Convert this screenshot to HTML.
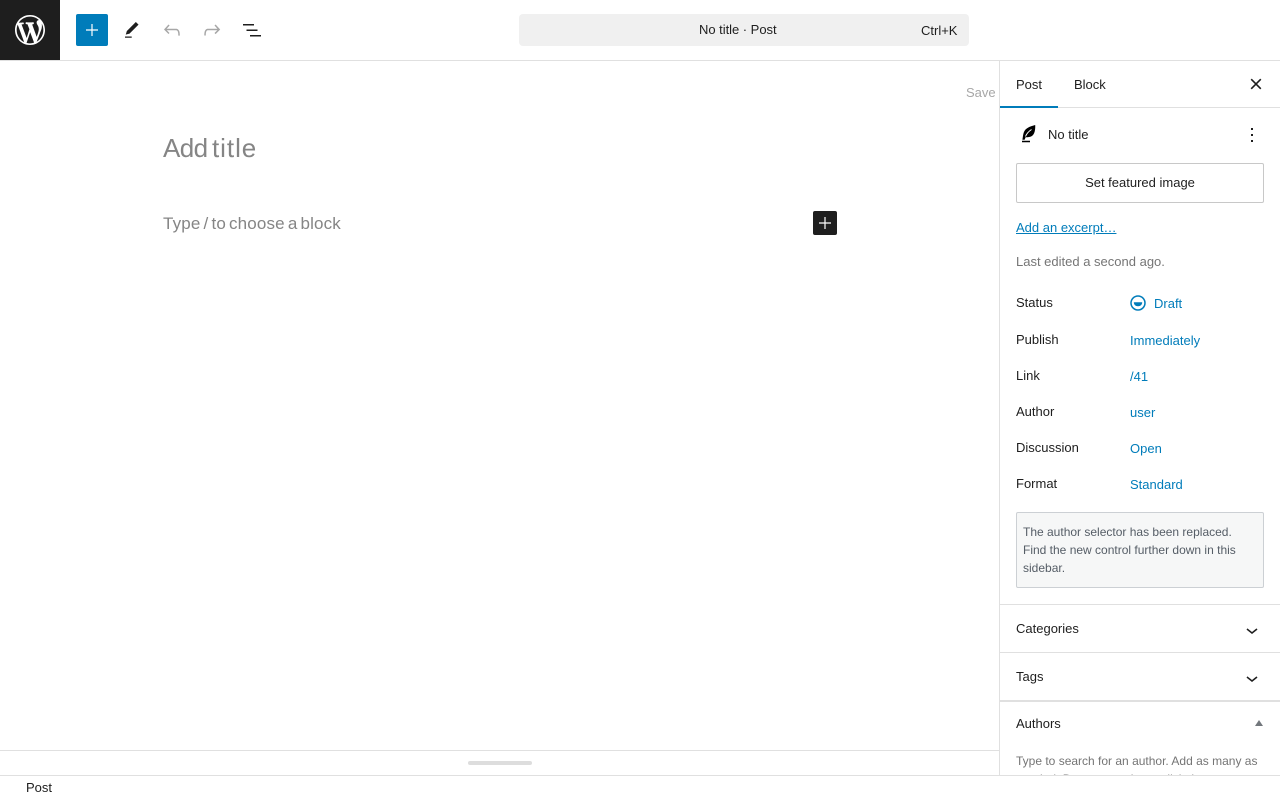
<!DOCTYPE html>
<html lang="en"><head><meta charset="utf-8"><title>Post</title>
<style>
html,body{margin:0;padding:0;width:1280px;height:800px;overflow:hidden;background:#fff;font-family:"Liberation Sans",sans-serif;font-size:13px;color:#1e1e1e}
.a{position:absolute;white-space:nowrap;line-height:16px}
svg{position:absolute;display:block}
.l{left:1016px}
.v{left:1130px;color:#007cba}
.line{position:absolute;background:#e0e0e0}
</style></head><body>
<div class="a" style="left:0;top:0;width:60px;height:60px;background:#1e1e1e"></div>
<svg style="left:12px;top:12px" width="36" height="36" viewBox="-2 -2 24 24" fill="#fff"><path d="M20 10c0-5.51-4.49-10-10-10C4.48 0 0 4.49 0 10c0 5.52 4.48 10 10 10 5.51 0 10-4.48 10-10zM7.78 15.37L4.37 6.22c.55-.02 1.17-.08 1.17-.08.5-.06.44-1.13-.06-1.11 0 0-1.45.11-2.37.11-.18 0-.37 0-.58-.01C4.12 2.69 6.87 1.11 10 1.11c2.33 0 4.45.87 6.05 2.34-.68-.11-1.65.39-1.65 1.58 0 .74.45 1.36.9 2.1.35.61.55 1.36.55 2.46 0 1.49-1.4 5-1.4 5l-3.03-8.37c.54-.02.82-.17.82-.17.5-.05.44-1.25-.06-1.22 0 0-1.44.12-2.38.12-.87 0-2.33-.12-2.33-.12-.5-.03-.56 1.2-.06 1.22l.92.08 1.26 3.41zM17.41 10c.24-.64.74-1.87.43-4.25.7 1.29 1.05 2.71 1.05 4.25 0 3.29-1.73 6.24-4.4 7.78.97-2.59 1.94-5.2 2.92-7.78zM6.1 18.09C3.12 16.65 1.11 13.53 1.11 10c0-1.3.23-2.48.72-3.59C3.25 10.3 4.67 14.2 6.1 18.09zm4.03-6.63l2.58 6.98c-.86.29-1.76.45-2.71.45-.79 0-1.57-.11-2.29-.33.81-2.38 1.62-4.74 2.42-7.1z"/></svg>
<div class="line" style="left:0;top:60px;width:1280px;height:1px"></div>

<div class="a" style="left:76px;top:14px;width:32px;height:32px;background:#007cba;border-radius:2px"></div>
<svg style="left:80px;top:18px" width="24" height="24" viewBox="0 0 24 24" fill="#fff"><path d="M18 11.4h-5.4V6h-1.2v5.4H6v1.2h5.4V18h1.2v-5.4H18z"/></svg>
<svg style="left:120px;top:18px" width="24" height="24" viewBox="0 0 24 24" fill="#1e1e1e"><path transform="translate(1.64 2.3) scale(.84)" d="M20.1 5.1L16.9 2 6.2 12.7l-1.3 4.4 4.5-1.3L20.1 5.1zM4 20.8h8v-1.5H4v1.5z"/></svg>
<svg style="left:160px;top:18px" width="24" height="24" viewBox="0 0 24 24" fill="#a7a7a7"><path d="M18.3 11.7c-.6-.6-1.4-.9-2.3-.9H6.7l2.9-3.3-1.1-1-4.5 5L8.5 16l1-1-2.7-2.7H16c.5 0 .9.2 1.3.5 1 1 1 3.4 1 4.5v.3h1.5v-.2c0-1.5 0-4.3-1.5-5.7z"/></svg>
<svg style="left:200px;top:18px" width="24" height="24" viewBox="0 0 24 24" fill="#a7a7a7"><path d="M15.6 6.5l-1.1 1 2.9 3.3H8c-.9 0-1.7.3-2.3.9-1.4 1.5-1.4 4.2-1.4 5.6v.2h1.5v-.3c0-1.1 0-3.5 1-4.5.3-.3.7-.5 1.3-.5h9.2L14.5 15l1.1 1.1 4.6-4.6-4.6-5z"/></svg>
<svg style="left:240px;top:18px" width="24" height="24" viewBox="0 0 24 24" fill="#1e1e1e"><path d="M3 6h11v1.5H3V6zm3.5 5.5h11V13h-11v-1.5zM21 17H10v1.5h11V17z"/></svg>

<div class="a" style="left:519px;top:14px;width:450px;height:32px;background:#f0f0f0;border-radius:4px"></div>
<div class="a" style="left:699px;top:22px;letter-spacing:-.03px">No title · Post</div>
<div class="a" style="left:921px;top:23px">Ctrl+K</div>

<div class="a" style="left:966px;top:85px;color:#a7a7a7">Save</div>
<div class="a" style="left:163px;top:130px;font-size:26px;line-height:36px;color:#858585;letter-spacing:-.6px">Add</div>
<div class="a" style="left:212px;top:130px;font-size:26px;line-height:36px;color:#858585;letter-spacing:.95px">title</div>
<div class="a" style="left:163px;top:212px;font-size:17px;line-height:24px;color:#858585;letter-spacing:.15px;word-spacing:-1.8px">Type / to choose a block</div>
<div class="a" style="left:813px;top:211px;width:24px;height:24px;background:#1e1e1e;border-radius:2px"></div>
<svg style="left:813px;top:211px" width="24" height="24" viewBox="0 0 24 24" fill="#fff"><path d="M18 11.4h-5.4V6h-1.2v5.4H6v1.2h5.4V18h1.2v-5.4H18z"/></svg>

<div class="line" style="left:0;top:750px;width:999px;height:1px"></div>
<div class="a" style="left:468px;top:761px;width:64px;height:4px;background:#ddd;border-radius:2px"></div>

<div class="line" style="left:999px;top:61px;width:1px;height:714px"></div>
<div class="a l" style="top:77px">Post</div>
<div class="a" style="left:1074px;top:77px">Block</div>
<svg style="left:1244px;top:72px" width="24" height="24" viewBox="0 0 24 24" fill="none" stroke="#1e1e1e" stroke-width="1.6"><path d="M7.200 7.200L16.800 16.800M16.800 7.200L7.200 16.800"/></svg>
<div class="line" style="left:1000px;top:107px;width:280px;height:1px"></div>
<div class="a" style="left:1000px;top:106px;width:58px;height:2px;background:#007cba"></div>

<svg style="left:1016px;top:122px" width="24" height="24" viewBox="0 0 24 24"><path fill="#000" d="M6 18.800h8v1.500H6zM6.400 17.800C7 15 7 10.500 9.300 7.800 11.500 5.300 15.500 4 19.200 3c.2 4-.3 7.500-2 9.800-1.500 2-4.300 2.700-7.500 2.300-.4.800-.7 1.700-1.100 2.700z"/><path fill="none" stroke="#fff" stroke-width="1" d="M9.500 14.500C10.500 12 12.500 9.500 15.500 7.500"/></svg>
<div class="a" style="left:1048px;top:127px">No title</div>
<svg style="left:1240px;top:123px" width="24" height="24" viewBox="0 0 24 24" fill="#1e1e1e"><path d="M13 19h-2v-2h2v2zm0-6h-2v-2h2v2zm0-6h-2V5h2v2z"/></svg>

<div class="a" style="left:1016px;top:163px;width:246px;height:38px;border:1px solid #c8c8c8;border-radius:2px;line-height:38px;text-align:center">Set featured image</div>
<div class="a l" style="top:220px;color:#007cba;text-decoration:underline">Add an excerpt…</div>
<div class="a l" style="top:254px;color:#757575">Last edited a second ago.</div>

<div class="a l" style="top:295px">Status</div>
<svg style="left:1130px;top:295px" width="16" height="16" viewBox="0 0 16 16"><circle cx="8" cy="8" r="7" fill="none" stroke="#007cba" stroke-width="1.500"/><path d="M3.800 7.200h8.400c0 2.500-1.800 4-4.200 4S3.800 9.700 3.800 7.200z" fill="#007cba"/></svg>
<div class="a" style="left:1154px;top:296px;color:#007cba">Draft</div>
<div class="a l" style="top:332px">Publish</div>
<div class="a v" style="top:333px">Immediately</div>
<div class="a l" style="top:368px">Link</div>
<div class="a v" style="top:369px">/41</div>
<div class="a l" style="top:404px">Author</div>
<div class="a v" style="top:405px">user</div>
<div class="a l" style="top:440px">Discussion</div>
<div class="a v" style="top:441px">Open</div>
<div class="a l" style="top:476px">Format</div>
<div class="a v" style="top:477px">Standard</div>

<div class="a" style="left:1016px;top:512px;width:246px;height:74px;border:1px solid #ccd0d4;border-radius:2px;background:#f6f7f7"></div>
<div class="a" style="left:1023px;top:523px;font-size:12px;line-height:18px;color:#555d66">The author selector has been replaced.<br>Find the new control further down in this<br>sidebar.</div>

<div class="line" style="left:1000px;top:604px;width:280px;height:1px"></div>
<div class="a l" style="top:621px">Categories</div>
<svg style="left:1240px;top:618px" width="24" height="24" viewBox="0 0 24 24" fill="#1e1e1e"><path d="M17.500 11.600L12 16l-5.500-4.400.900-1.200L12 14l4.500-3.600 1 1.200z"/></svg>
<div class="line" style="left:1000px;top:652px;width:280px;height:1px"></div>
<div class="a l" style="top:669px">Tags</div>
<svg style="left:1240px;top:666px" width="24" height="24" viewBox="0 0 24 24" fill="#1e1e1e"><path d="M17.500 11.600L12 16l-5.500-4.400.900-1.200L12 14l4.500-3.600 1 1.200z"/></svg>
<div class="line" style="left:1000px;top:700px;width:280px;height:2px"></div>
<div class="a l" style="top:716px">Authors</div>
<svg style="left:1255px;top:720px" width="8" height="6" viewBox="0 0 8 6" fill="#72777c"><path d="M4 0l4 6H0z"/></svg>
<div class="a l" style="top:752px;font-size:12px;line-height:18px;color:#757575;white-space:normal;width:248px;height:23px;overflow:hidden">Type to search for an author. Add as many as needed. Drag to reorder or click the stars</div>

<div class="a" style="left:0;top:775px;width:1280px;height:25px;background:#fff"></div>
<div class="line" style="left:0;top:775px;width:1280px;height:1px"></div>
<div class="a" style="left:26px;top:780px">Post</div>
</body></html>
